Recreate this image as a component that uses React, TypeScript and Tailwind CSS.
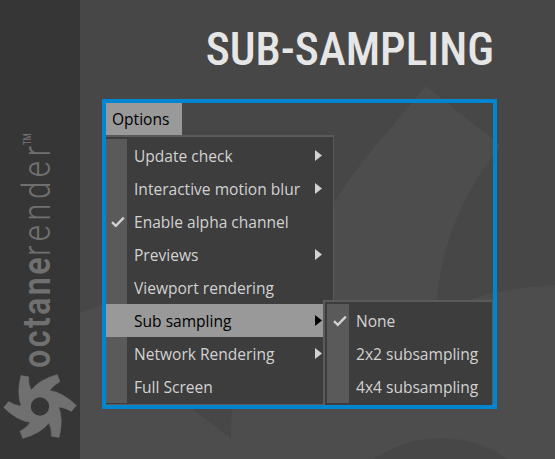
import React from "react";

type Item = { label: string; arrow?: boolean; checked?: boolean; active?: boolean };

const OPTIONS: Item[] = [
  { label: "Update check", arrow: true },
  { label: "Interactive motion blur", arrow: true },
  { label: "Enable alpha channel", checked: true },
  { label: "Previews", arrow: true },
  { label: "Viewport rendering" },
  { label: "Sub sampling", arrow: true, active: true },
  { label: "Network Rendering", arrow: true },
  { label: "Full Screen" },
];

const SUB_OPTIONS: Item[] = [
  { label: "None", checked: true },
  { label: "2x2 subsampling" },
  { label: "4x4 subsampling" },
];

const BLADE = "M0 0L-9.3 -16Q-1 -27 17.3 -32L20 -24.7Q13 -21 10 -16Z";

function Logo() {
  return (
    <svg width="80" height="80" viewBox="-40 -39.5 80 80" className="block shrink-0">
      {[0, 60, 120, 180, 240, 300].map((a) => (
        <path key={a} d={BLADE} fill="#707070" stroke="#707070" strokeWidth="0.4" transform={`rotate(${a})`} />
      ))}
      <circle r="9.2" fill="#363636" />
    </svg>
  );
}

function Backdrop() {
  return (
    <svg width="555" height="459" className="absolute inset-0">
      <path
        d="M426 86L501 146Q440 220 436 312Q490 288 555 285V459H80V313L135 293Q160 384 193 409L231 439Q228 330 333 204Q352 174 372 150Z"
        fill="#4d4d4d"
      />
      <circle cx="441" cy="555" r="117" fill="#474747" />
    </svg>
  );
}

function Check() {
  return (
    <svg width="14" height="12" viewBox="0 0 14 12" className="block">
      <path d="M1 6.2L4.8 9.8L12.8 1.6" fill="none" stroke="#d2d2d2" strokeWidth="2.3" />
    </svg>
  );
}

function Row({ item, gutter }: { item: Item; gutter: string }) {
  return (
    <div className={`flex h-[33px] items-center ${item.active ? "bg-[#999999] text-black" : "text-[#d2d2d2]"}`}>
      <div className={`flex h-full shrink-0 items-center ${gutter} ${item.active ? "" : "bg-[#5a5a5a]"}`}>
        {item.checked && <Check />}
      </div>
      <span className="ml-[7px] min-w-0 flex-1 origin-left scale-x-[0.915] whitespace-nowrap">{item.label}</span>
      {item.arrow && (
        <svg width="7" height="11" viewBox="0 0 7 11" className="mr-[1px] block shrink-0">
          <path d="M0 0L7 5.5L0 11Z" fill="currentColor" />
        </svg>
      )}
    </div>
  );
}

export default function App() {
  return (
    <div className="relative flex h-[459px] w-[555px] overflow-hidden bg-[#474747] font-['Open_Sans','Noto_Sans',sans-serif] text-[17px] leading-[22px]">
      <Backdrop />
      <aside className="relative flex w-20 shrink-0 flex-col items-center bg-[#363636] pt-[128px] text-[#707070]">
        <div className="flex h-[239px] w-[50px] rotate-180 items-start justify-start font-['Roboto',sans-serif] text-[38px] leading-[44px] whitespace-nowrap [writing-mode:vertical-rl]">
          <span className="-mt-px h-[112px] origin-top scale-y-[0.85] font-semibold tracking-[2.8px]">octane</span>
          <span className="h-[111px] origin-top scale-y-[0.82] font-light tracking-[5.5px]">render</span>
          <span className="mr-[8px] origin-top scale-y-[0.78] text-[10px] leading-[10px] font-medium">TM</span>
        </div>
        <Logo />
      </aside>
      <main className="relative flex-1 pt-[22px] pl-[22px]">
        <h1 className="flex h-[56px] w-[392px] items-center justify-end font-['Roboto',sans-serif] text-[45.5px] leading-[56px] font-medium whitespace-nowrap text-[#e6e6e6] font-stretch-75%">
          SUB-SAMPLING
        </h1>
        <section className="mt-[21px] h-[310px] w-[395px] border-4 border-[#0086d1]">
          <div className="flex h-8 w-[76px] items-center bg-[#999999] pl-1.5 text-black">
            <span className="origin-left scale-x-[0.915]">Options</span>
          </div>
          <div className="flex h-[270px] items-start">
            <div className="h-[270px] w-[228px] border-t-2 border-r border-b border-[#5a5a5a] bg-[#3d3d3d] pt-[2px]">
              <div className="w-[217px]">
                {OPTIONS.map((o) => (
                  <Row key={o.label} item={o} gutter="w-[21px] pl-[5px]" />
                ))}
              </div>
            </div>
            <div className="relative mt-[165px] -ml-[11px] h-[105px] w-[170px] border-t-2 border-r border-l-2 border-[#5a5a5a] bg-[#3d3d3d] pt-[2px] pl-[2px]">
              {SUB_OPTIONS.map((o) => (
                <Row key={o.label} item={o} gutter="w-[22px] pl-[6px]" />
              ))}
            </div>
          </div>
        </section>
      </main>
    </div>
  );
}
